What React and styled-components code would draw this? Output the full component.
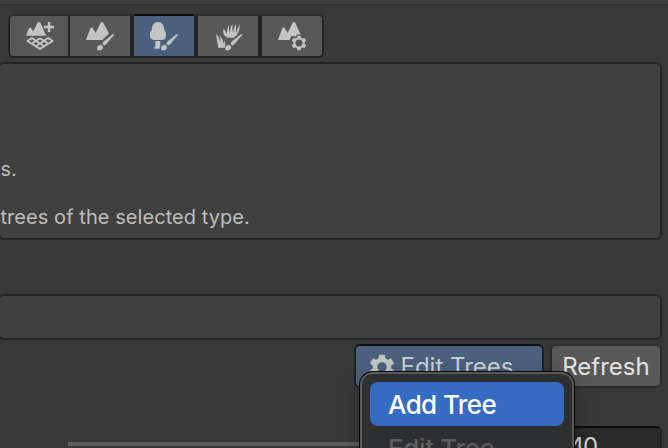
import React from "react";
import styled, { createGlobalStyle, css } from "styled-components";

const Global = createGlobalStyle`
  * { box-sizing: border-box; }
  body { margin: 0; background: #383838; overflow: hidden; }
`;

const Inspector = styled.main`
  position: relative;
  display: flex;
  flex-direction: column;
  width: 668px;
  height: 448px;
  overflow: hidden;
  background: #383838;
  color: #c4c4c4;
  font-family: Inter, sans-serif;
`;

const HeaderEdge = styled.div`
  flex: none;
  height: 6px;
  background: #3e3e3e;
  border-bottom: 2px solid #303030;
`;

const Toolbar = styled.nav`
  display: flex;
  flex: none;
  width: 316px;
  height: 44px;
  margin: 8px 0 4px 8px;
  padding: 2px;
  background: #242424;
  border-radius: 6px;
  box-shadow: inset 0 2px #303030;
`;

const ToolButton = styled.button`
  flex: none;
  width: ${(p) => p.$width || 60}px;
  height: 40px;
  margin: 0 ${(p) => p.$divider ?? 4}px 0 0;
  padding: 0;
  border: 0;
  border-radius: ${(p) => p.$radius || "0"};
  background: #585858;
  ${(p) =>
    p.$active &&
    css`
      background: #4a607c;
      box-shadow: 0 -2px #0f0f0f;
    `}
`;

const Glyph = styled.svg`
  display: block;
  width: 100%;
  height: 100%;
  fill: #c4c4c4;
`;

const Panel = styled.section`
  flex: none;
  width: 664px;
  height: ${(p) => p.$height}px;
  margin: 0 0 ${(p) => p.$after}px -2px;
  padding-top: ${(p) => p.$inset || 0}px;
  border: 2px solid #242424;
  border-radius: 6px;
  background: #404040;
`;

const HelpLine = styled.p`
  margin: 0;
  height: 48px;
  padding-left: 0.5px;
  font-size: 20px;
  line-height: 24px;
  letter-spacing: 0.06px;
  white-space: nowrap;
  color: #bdbdbd;
`;

const Actions = styled.div`
  display: flex;
  flex: none;
  justify-content: flex-end;
  gap: 6px;
  margin-right: 6px;
`;

const ActionButton = styled.button`
  display: flex;
  align-items: center;
  justify-content: ${(p) => (p.$active ? "flex-start" : "center")};
  gap: 6px;
  width: ${(p) => p.$width}px;
  height: 44px;
  padding: 2px 0 0 ${(p) => (p.$active ? 12.5 : 0)}px;
  border: 2px solid ${(p) => (p.$active ? "#1c1e21" : "#292929")};
  border-top-color: ${(p) => (p.$active ? "#0d0d0d" : "#303030")};
  border-radius: 6px;
  background: ${(p) => (p.$active ? "#4a607c" : "#585858")};
  color: ${(p) => (p.$active ? "#c9ced5" : "#e4e4e4")};
  font: 400 24px/30px Inter, sans-serif;
  white-space: nowrap;
`;

const GearIcon = styled.svg`
  flex: none;
  width: 26px;
  height: 26px;
  fill: #c4c4c4;
`;

const SliderRow = styled.div`
  display: flex;
  flex: none;
  justify-content: flex-end;
  gap: 12px;
  margin: 38px 6px 0 68px;
`;

const Track = styled.div`
  flex: 1;
  height: 4px;
  margin-top: 16px;
  background: #5e5e5e;
`;

const NumberField = styled.div`
  width: 106px;
  height: 44px;
  padding: 1px 0 0 11px;
  border: 2px solid #212121;
  border-top-color: #0d0d0d;
  border-radius: 6px;
  background: #2a2a2a;
  color: #d2d2d2;
  font-size: 24px;
  line-height: 36px;
  letter-spacing: -1.6px;
`;

const Menu = styled.div`
  position: absolute;
  left: 360px;
  top: 372px;
  width: 214px;
  height: 130px;
  padding: 8px;
  border: 2px solid #58595a;
  border-radius: 13px;
  background: #2e2f30;
  box-shadow: 0 0 0 1px #080808, 0 8px 22px rgba(0, 0, 0, 0.28);
`;

const MenuItem = styled.div`
  height: 44px;
  padding-left: 18px;
  border-radius: 8px;
  background: ${(p) => (p.$selected ? "#356bc2" : "transparent")};
  color: ${(p) => (p.$selected ? "#ffffff" : "#5d5e5f")};
  font-size: 26px;
  font-weight: 500;
  line-height: 46px;
  letter-spacing: ${(p) => p.$track || 0}px;
  white-space: nowrap;
`;

/* Paint brush shared by the terrain painting tools. */
const Brush = ({ x }) => (
  <g transform={`translate(${x} 0)`}>
    <path d="M17.2 33.8 18.2 34.8 9.6 44.7Q8.2 46 7 44.6 5.8 43.3 7.2 42Z" />
    <path d="M1 50.3Q1.5 49.2 1.2 47.8 1.5 44.9 4.2 45 7 45.1 7 47.5 6.6 50.4 3 50.3Z" />
  </g>
);

const Peaks = ({ x }) => (
  <path
    transform={`translate(${x} 0)`}
    d="M0 40 4.3 28.6Q5.4 26 7 28.4L9.6 33 14.3 23.3Q16 20.8 17.7 23.4L23 33.5 16.2 40Z"
  />
);

const cog = (cx, cy, outer, inner, teeth, wide, narrow) => {
  const pts = [];
  for (let i = 0; i < teeth; i++) {
    const a = (i * 2 * Math.PI) / teeth - Math.PI / 2;
    [[-wide, inner], [-narrow, outer], [narrow, outer], [wide, inner]].forEach(([d, r]) =>
      pts.push(`${(cx + Math.cos(a + d) * r).toFixed(2)} ${(cy + Math.sin(a + d) * r).toFixed(2)}`)
    );
  }
  return `M${pts.join("L")}Z`;
};

const NeighborIcon = () => (
  <Glyph viewBox="10 16 58 40">
    <path d="M26 35.7 28.6 29Q29.9 26 31.6 28.7L33.2 31.4 37.2 23.5Q39 20.6 40.8 23.5L46.2 35.7Z" />
    <path d="M47.8 22h2.5v3.8H54v2.5h-3.7V32h-2.5v-3.7h-3.8v-2.5h3.8Z" />
    <g fill="none" stroke="#c4c4c4" strokeWidth="1.9" strokeLinejoin="round">
      <path d="M32.5 37.6 27.4 41 40 48.9 52.6 41 47.5 37.6" />
      <path d="M31.6 43.7 38.2 39.4Q40 38.2 41.8 39.4L48.4 43.7" />
      <path d="M35.8 46.3 43.6 41.2 47.8 38M44.2 46.3 36.4 41.2 32.2 38" />
    </g>
  </Glyph>
);

const SculptIcon = () => (
  <Glyph viewBox="70 16 60 40">
    <Peaks x={86} />
    <Brush x={96} />
  </Glyph>
);

const TreeIcon = () => (
  <Glyph viewBox="134 16 60 40">
    <path d="M158 22C154.2 22 151.9 25 151.8 30 149.8 31.6 150 33.7 150 35.8 150 38.8 152 40 155 40H161C164.5 40 166 38.5 166 35.5 166 33.6 166 31.5 164.2 30 164.1 25 161.8 22 158 22Z" />
    <path d="M155.4 41H160.2V45.2L159.4 48.8H154.2V47.2L155.4 46.5Z" />
    <Brush x={160} />
  </Glyph>
);

const DetailIcon = () => (
  <Glyph viewBox="198 16 60 40">
    <path d="M216.2 34Q219.8 37.5 220 42.5 220.8 38.5 219.7 35.2 223.4 39.5 223.2 44 224.2 41.7 224 39.4 226 43.6 224.8 47.8H218.4Q216.6 40.5 216.2 34Z" />
    <path d="M228.7 24.8Q226.6 29 226.9 33.4L223.6 28.6Q221.6 35 227.4 37.8H234L237 34.8Q239.9 31 239.7 24.2 237.2 28.2 236.5 33.4 235.6 29 236.3 24 233.4 27.5 233.2 33.2 231.9 29 232.6 24.1 229.8 27.5 229.9 33.2 228.3 29 228.7 24.8Z" />
    <Brush x={224.2} />
  </Glyph>
);

const SettingsIcon = () => (
  <Glyph viewBox="262 16 60 40">
    <path d="M278 40 282.2 28.6Q283.4 26 285 28.4L287.6 33 292.3 23.3Q294 20.8 295.7 23.4L300.6 34.4H296.7L295.8 36.4 291.4 36 289.6 40Z" />
    <path
      fillRule="evenodd"
      d={`${cog(299, 43, 7.5, 5.5, 6, 0.42, 0.19)}M302.5 43a3.5 3.5 0 1 0-7 0a3.5 3.5 0 1 0 7 0Z`}
    />
  </Glyph>
);

export default function App() {
  return (
    <Inspector>
      <Global />
      <HeaderEdge />
      <Toolbar>
        <ToolButton $width={58} $divider={2} $radius="4px 0 0 4px" aria-label="Create neighbor terrains"><NeighborIcon /></ToolButton>
        <ToolButton aria-label="Paint terrain"><SculptIcon /></ToolButton>
        <ToolButton $active aria-label="Paint trees"><TreeIcon /></ToolButton>
        <ToolButton aria-label="Paint details"><DetailIcon /></ToolButton>
        <ToolButton $divider={0} $radius="0 4px 4px 0" aria-label="Terrain settings"><SettingsIcon /></ToolButton>
      </Toolbar>

      <Panel $height={178} $after={54} $inset={93}>
        <HelpLine>s.</HelpLine>
        <HelpLine>trees of the selected type.</HelpLine>
      </Panel>
      <Panel $height={46} $after={4} />

      <Actions>
        <ActionButton $active $width={190}>
          <GearIcon viewBox="0 0 26 26">
            <path
              fillRule="evenodd"
              d={`${cog(13, 13, 12.6, 9.4, 6, 0.36, 0.25)}M17.8 13a4.8 4.8 0 1 0-9.6 0a4.8 4.8 0 1 0 9.6 0Z`}
            />
          </GearIcon>
          Edit Trees
        </ActionButton>
        <ActionButton $width={112}>Refresh</ActionButton>
      </Actions>

      <SliderRow>
        <Track />
        <NumberField>40</NumberField>
      </SliderRow>

      <Menu>
        <MenuItem $selected $track={-0.6}>Add Tree</MenuItem>
        <MenuItem $track={-0.35}>Edit Tree</MenuItem>
      </Menu>
    </Inspector>
  );
}
